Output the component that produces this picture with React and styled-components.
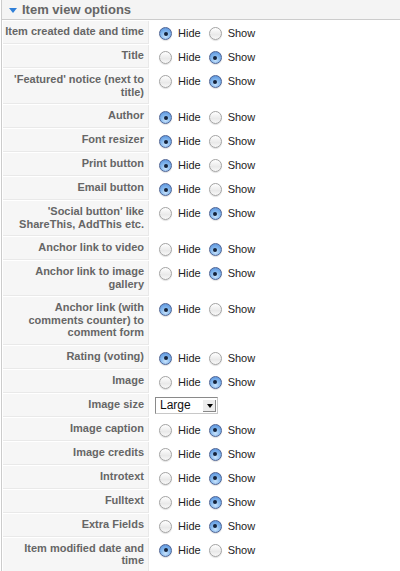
import React from "react";
import styled, { createGlobalStyle } from "styled-components";

const Global = createGlobalStyle`
  html, body { margin: 0; padding: 0; background: #fff; }
  body { font-family: "Liberation Sans", Arial, sans-serif; }
`;

const Panel = styled.div`
  width: 399px;
  border-left: 1px solid #cccccc;
  margin-left: 1px;
  box-sizing: border-box;
`;

const Header = styled.div`
  height: 19px;
  border-bottom: 1px solid #cccccc;
  background: #f4f4f4;
  display: flex;
  align-items: center;
  gap: 5px;
  padding-left: 7px;
  font-size: 13px;
  font-weight: bold;
  color: #666;
`;

const Triangle = styled.span`
  width: 0;
  height: 0;
  border-left: 4px solid transparent;
  border-right: 4px solid transparent;
  border-top: 5px solid #2f7fd8;
  margin-top: 1px;
`;

const Grid = styled.div`
  display: grid;
  grid-template-columns: 146px 1fr;
  column-gap: 1px;
  row-gap: 1px;
  padding: 1px 0 0 1px;
`;

const Key = styled.div`
  background: #f6f6f6;
  border-bottom: 1px solid #e9e9e9;
  border-right: 1px solid #e9e9e9;
  color: #666;
  font-size: 11px;
  font-weight: bold;
  line-height: 12.5px;
  text-align: right;
  padding: 4px 4px 5px 0;
  box-sizing: border-box;
  min-height: 23px;
`;

const Value = styled.div`
  display: flex;
  align-items: flex-start;
  padding: 6px 0 0 9px;
  font-size: 11px;
  color: #222;
`;

const Option = styled.label`
  display: flex;
  align-items: center;
  gap: 6px;
  margin-right: 8px;
  line-height: 13px;
`;

const Radio = styled.span`
  position: relative;
  width: 13px;
  height: 13px;
  border-radius: 50%;
  box-sizing: border-box;
  border: 1px solid ${(p) => (p.$on ? "#4d6394" : "#a3a3a3")};
  background: ${(p) =>
    p.$on
      ? "radial-gradient(circle at 50% 75%, #c9e3fb 0%, #86b9ee 45%, #4f8ad8 100%)"
      : "linear-gradient(#ffffff, #e9e9e9 60%, #f8f8f8)"};
  box-shadow: 0 1px 1px rgba(0,0,0,0.12);
  &::after {
    content: "";
    display: ${(p) => (p.$on ? "block" : "none")};
    position: absolute;
    left: 3.5px;
    top: 3.5px;
    width: 4px;
    height: 4px;
    border-radius: 50%;
    background: #15233a;
  }
`;

const Select = styled.div`
  display: flex;
  width: 63px;
  height: 17px;
  box-sizing: border-box;
  border: 1px solid #8a8a8a;
  border-right-color: #c8c8c8;
  border-bottom-color: #c8c8c8;
  background: #fff;
  margin-top: -3px;
  margin-left: -4px;
  font-size: 12px;
  color: #111;
`;

const SelectText = styled.span`
  flex: 1;
  padding-left: 4px;
  line-height: 15px;
`;

const SelectArrow = styled.span`
  width: 13px;
  margin: 1px;
  background: #ececec;
  border-left: 1px solid #fff;
  border-top: 1px solid #fff;
  box-shadow: inset -1px -1px 0 #888;
  display: flex;
  align-items: center;
  justify-content: center;
  &::after {
    content: "";
    border-left: 3.5px solid transparent;
    border-right: 3.5px solid transparent;
    border-top: 4px solid #000;
  }
`;

const rows = [
  ["Item created date and time", "hide"],
  ["Title", "show"],
  ["'Featured' notice (next to title)", "show"],
  ["Author", "hide"],
  ["Font resizer", "hide"],
  ["Print button", "hide"],
  ["Email button", "hide"],
  ["'Social button' like ShareThis, AddThis etc.", "show"],
  ["Anchor link to video", "show"],
  ["Anchor link to image gallery", "show"],
  ["Anchor link (with comments counter) to comment form", "hide"],
  ["Rating (voting)", "hide"],
  ["Image", "show"],
  ["Image size", "select"],
  ["Image caption", "show"],
  ["Image credits", "show"],
  ["Introtext", "show"],
  ["Fulltext", "show"],
  ["Extra Fields", "show"],
  ["Item modified date and time", "hide"],
  ["", "none"],
];

export default function App() {
  return (
    <>
      <Global />
      <Panel>
        <Header>
          <Triangle />
          Item view options
        </Header>
        <Grid>
          {rows.map(([label, v], i) => (
            <React.Fragment key={i}>
              <Key>{label}</Key>
              <Value>
                {v === "select" ? (
                  <Select>
                    <SelectText>Large</SelectText>
                    <SelectArrow />
                  </Select>
                ) : v === "none" ? null : (
                  <>
                    <Option>
                      <Radio $on={v === "hide"} />
                      Hide
                    </Option>
                    <Option>
                      <Radio $on={v === "show"} />
                      Show
                    </Option>
                  </>
                )}
              </Value>
            </React.Fragment>
          ))}
        </Grid>
      </Panel>
    </>
  );
}
